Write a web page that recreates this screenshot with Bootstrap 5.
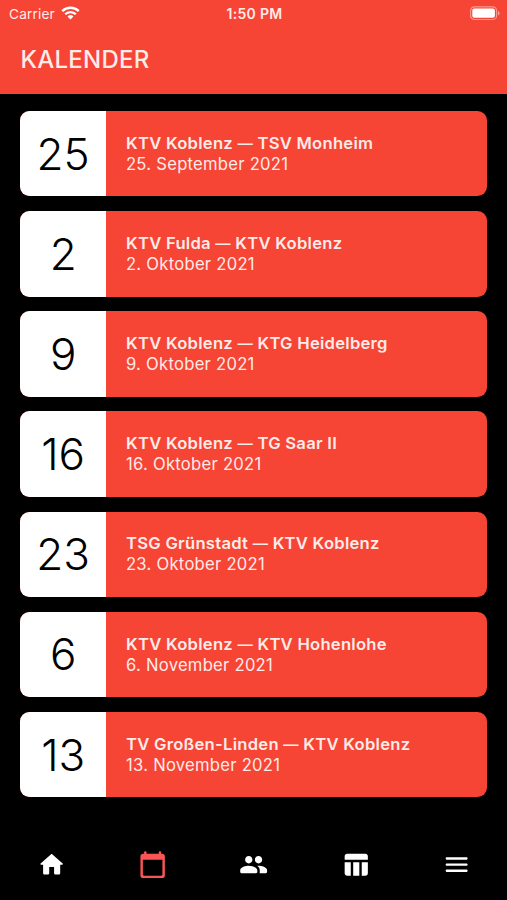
<!DOCTYPE html>
<html lang="de">
<head>
<meta charset="utf-8">
<meta name="viewport" content="width=device-width, initial-scale=1">
<title>Kalender</title>
<link href="https://cdn.jsdelivr.net/npm/bootstrap@5.3.0/dist/css/bootstrap.min.css" rel="stylesheet">
<style>
:root{--ktv-red:#f64435;--ktv-text:#ffebe8}
body{font-family:Inter,"Liberation Sans",sans-serif;background:#000}
.app-head{height:93.7px;background:var(--ktv-red);color:var(--ktv-text)}
.status-bar{height:28px;padding:0 7px 0 9px;font-size:13.7px;line-height:28px}
.status-bar>div{flex:1 1 0}
.carrier{letter-spacing:.15px}
.wifi{margin-left:6px;margin-bottom:2px}
.battery{margin-bottom:2px}
.clock{font-size:14px;letter-spacing:.3px}
.app-title{font-size:24px;font-weight:500;line-height:30px;padding:17px 20.5px 0;letter-spacing:.25px}
.match-list{padding:17.3px 19.7px 0 20.3px;gap:14.75px}
.match{height:85.4px;border-radius:9.5px;background:var(--ktv-red);color:var(--ktv-text)}
.match-day{width:85.7px;font-size:44px;font-weight:300;line-height:1;color:#000}
.match-info{padding-left:20px;padding-top:.4px;font-size:16.6px;line-height:21px;letter-spacing:.27px}
.match-name{font-weight:600}
.dash{font-size:.92em;line-height:1}
.tab-bar{height:71px;padding-left:1px}
.tab-bar svg{width:29.3px;height:29.3px;display:block}
.tab-bar a{color:#fff}
.tab-bar a.active{color:#fb5454}
</style>
</head>
<body>
<div class="d-flex flex-column vh-100 overflow-hidden">
<header class="app-head flex-shrink-0">
  <div class="status-bar d-flex align-items-center">
    <div class="d-flex align-items-center"><span class="carrier">Carrier</span>
      <svg class="wifi" width="19" height="14.25" viewBox="0 0 20 15" fill="none" stroke="#fff" stroke-width="2.5"><path d="M1.3 5.4a12.4 12.4 0 0 1 17.4 0M4.4 8.7a8 8 0 0 1 11.2 0"/><path d="M10 14.2 6.9 11a4.4 4.4 0 0 1 6.2 0z" fill="#fff" stroke="none"/></svg>
    </div>
    <span class="clock fw-semibold">1:50 PM</span>
    <div class="d-flex justify-content-end">
      <svg class="battery" width="30" height="15" viewBox="0 0 30 15"><rect x=".6" y=".9" width="26" height="12.6" rx="3.8" fill="none" stroke="#fff" stroke-opacity=".45" stroke-width="1.2"/><rect x="2.3" y="2.6" width="22.6" height="9.2" rx="2" fill="#fff"/><path d="M28 5v4.4q1.6-.7 1.6-2.2T28 5z" fill="#fff" fill-opacity=".5"/></svg>
    </div>
  </div>
  <h1 class="app-title m-0">KALENDER</h1>
</header>
<main class="match-list d-flex flex-column flex-grow-1">
  <article class="match d-flex overflow-hidden"><div class="match-day bg-white d-flex align-items-center justify-content-center">25</div><div class="match-info d-flex flex-column justify-content-center"><span class="match-name">KTV Koblenz <span class="dash">—</span> TSV Monheim</span><span class="match-date">25. September 2021</span></div></article>
  <article class="match d-flex overflow-hidden"><div class="match-day bg-white d-flex align-items-center justify-content-center">2</div><div class="match-info d-flex flex-column justify-content-center"><span class="match-name">KTV Fulda <span class="dash">—</span> KTV Koblenz</span><span class="match-date">2. Oktober 2021</span></div></article>
  <article class="match d-flex overflow-hidden"><div class="match-day bg-white d-flex align-items-center justify-content-center">9</div><div class="match-info d-flex flex-column justify-content-center"><span class="match-name">KTV Koblenz <span class="dash">—</span> KTG Heidelberg</span><span class="match-date">9. Oktober 2021</span></div></article>
  <article class="match d-flex overflow-hidden"><div class="match-day bg-white d-flex align-items-center justify-content-center">16</div><div class="match-info d-flex flex-column justify-content-center"><span class="match-name">KTV Koblenz <span class="dash">—</span> TG Saar II</span><span class="match-date">16. Oktober 2021</span></div></article>
  <article class="match d-flex overflow-hidden"><div class="match-day bg-white d-flex align-items-center justify-content-center">23</div><div class="match-info d-flex flex-column justify-content-center"><span class="match-name">TSG Grünstadt <span class="dash">—</span> KTV Koblenz</span><span class="match-date">23. Oktober 2021</span></div></article>
  <article class="match d-flex overflow-hidden"><div class="match-day bg-white d-flex align-items-center justify-content-center">6</div><div class="match-info d-flex flex-column justify-content-center"><span class="match-name">KTV Koblenz <span class="dash">—</span> KTV Hohenlohe</span><span class="match-date">6. November 2021</span></div></article>
  <article class="match d-flex overflow-hidden"><div class="match-day bg-white d-flex align-items-center justify-content-center">13</div><div class="match-info d-flex flex-column justify-content-center"><span class="match-name">TV Großen-Linden <span class="dash">—</span> KTV Koblenz</span><span class="match-date">13. November 2021</span></div></article>
</main>
<nav class="tab-bar d-flex align-items-center flex-shrink-0">
  <a href="#" class="flex-fill d-flex justify-content-center" aria-label="Start"><svg viewBox="0 0 24 24" fill="currentColor"><path d="M10 19v-5h4v5c0 .55.45 1 1 1h3c.55 0 1-.45 1-1v-7h1.7c.46 0 .68-.57.33-.87L12.67 3.6c-.38-.34-.96-.34-1.34 0l-8.36 7.53c-.34.3-.13.87.33.87H5v7c0 .55.45 1 1 1h3c.55 0 1-.45 1-1z"/></svg></a>
  <a href="#" class="active flex-fill d-flex justify-content-center" aria-label="Kalender"><svg viewBox="0 0 24 24" fill="currentColor"><path d="M20 3h-1V2c0-.55-.45-1-1-1s-1 .45-1 1v1H7V2c0-.55-.45-1-1-1s-1 .45-1 1v1H4c-1.1 0-2 .9-2 2v16c0 1.1.9 2 2 2h16c1.1 0 2-.9 2-2V5c0-1.1-.9-2-2-2zm-1 18H5c-.55 0-1-.45-1-1V8h16v12c0 .55-.45 1-1 1z"/></svg></a>
  <a href="#" class="flex-fill d-flex justify-content-center" aria-label="Team"><svg viewBox="0 0 24 24" fill="currentColor"><path d="M16 11c1.66 0 2.99-1.34 2.99-3S17.66 5 16 5s-3 1.34-3 3 1.34 3 3 3zm-8 0c1.66 0 2.99-1.34 2.99-3S9.66 5 8 5 5 6.34 5 8s1.34 3 3 3zm0 2c-2.33 0-7 1.17-7 3.5V18c0 .55.45 1 1 1h12c.55 0 1-.45 1-1v-1.5c0-2.33-4.67-3.5-7-3.5zm8 0c-.29 0-.62.02-.97.05.02.01.03.03.04.04 1.14.83 1.93 1.94 1.93 3.41V18c0 .35-.07.69-.18 1H22c.55 0 1-.45 1-1v-1.5c0-2.33-4.67-3.5-7-3.5z"/></svg></a>
  <a href="#" class="flex-fill d-flex justify-content-center" aria-label="Tabelle"><svg viewBox="0 0 24 24" fill="currentColor"><path d="M10 10.02h5V21h-5V10.02zM17 21h3c1.1 0 2-.9 2-2v-9h-5v11zm3-18H5c-1.1 0-2 .9-2 2v3h19V5c0-1.1-.9-2-2-2zM3 19c0 1.1.9 2 2 2h3V10H3v9z"/></svg></a>
  <a href="#" class="flex-fill d-flex justify-content-center" aria-label="Menü"><svg viewBox="0 0 24 24" fill="currentColor"><path d="M4 18h16c.55 0 1-.45 1-1s-.45-1-1-1H4c-.55 0-1 .45-1 1s.45 1 1 1zm0-5h16c.55 0 1-.45 1-1s-.45-1-1-1H4c-.55 0-1 .45-1 1s.45 1 1 1zM3 7c0 .55.45 1 1 1h16c.55 0 1-.45 1-1s-.45-1-1-1H4c-.55 0-1 .45-1 1z"/></svg></a>
</nav>
</div>
<script src="https://cdn.jsdelivr.net/npm/bootstrap@5.3.0/dist/js/bootstrap.bundle.min.js"></script>
</body>
</html>
